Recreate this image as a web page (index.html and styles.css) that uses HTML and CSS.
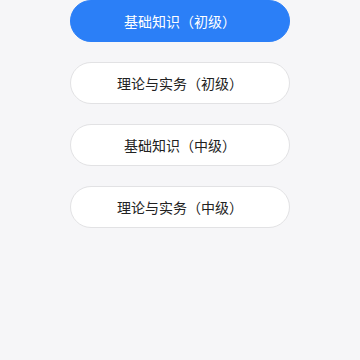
FILE: index.html
```html
<!DOCTYPE html>
<html lang="zh-CN">
<head>
    <meta charset="UTF-8">
    <meta name="viewport" content="width=device-width, initial-scale=1.0">
    <title>选择科目</title>
    <link rel="stylesheet" href="styles.css">
</head>
<body>
    <div class="subject-list">
        <div class="subject active">基础知识（初级）</div>
        <div class="subject">理论与实务（初级）</div>
        <div class="subject">基础知识（中级）</div>
        <div class="subject">理论与实务（中级）</div>
    </div>
</body>
</html>
```

FILE: styles.css
```css
body {
    margin: 0;
    background: #f6f6f8;
    font-family: "Noto Sans CJK SC", "Noto Sans", sans-serif;
    height: 100vh;
}

.subject-list {
    display: flex;
    flex-direction: column;
    align-items: center;
    gap: 20px;
}

.subject {
    box-sizing: border-box;
    width: 220px;
    height: 42px;
    display: flex;
    align-items: center;
    justify-content: center;
    background: #fff;
    border: 1px solid #e2e2e4;
    border-radius: 21px;
    font-size: 14px;
    color: #222;
    cursor: pointer;
}

.subject.active {
    background: #2b7ff7;
    border-color: #2b7ff7;
    color: #fff;
}
```
